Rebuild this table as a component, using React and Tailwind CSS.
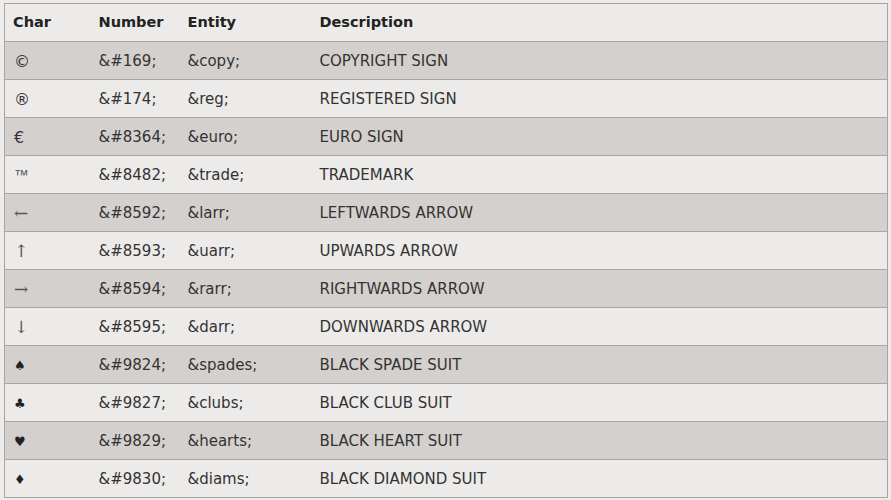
const rows = [
  ['\u00A9', '&#169;', '&copy;', 'COPYRIGHT SIGN'],
  ['\u00AE', '&#174;', '&reg;', 'REGISTERED SIGN'],
  ['\u20AC', '&#8364;', '&euro;', 'EURO SIGN'],
  ['\u2122', '&#8482;', '&trade;', 'TRADEMARK'],
  ['\u2190', '&#8592;', '&larr;', 'LEFTWARDS ARROW'],
  ['\u2191', '&#8593;', '&uarr;', 'UPWARDS ARROW'],
  ['\u2192', '&#8594;', '&rarr;', 'RIGHTWARDS ARROW'],
  ['\u2193', '&#8595;', '&darr;', 'DOWNWARDS ARROW'],
  ['\u2660', '&#9824;', '&spades;', 'BLACK SPADE SUIT'],
  ['\u2663', '&#9827;', '&clubs;', 'BLACK CLUB SUIT'],
  ['\u2665', '&#9829;', '&hearts;', 'BLACK HEART SUIT'],
  ['\u2666', '&#9830;', '&diams;', 'BLACK DIAMOND SUIT'],
];

// char glyph styling: arrows look thin and long, suits are small
const charClass = (i) => {
  if (i >= 4 && i <= 7) return "font-['DejaVu_Serif',serif] text-[17px] text-[#555]";
  if (i >= 8) return "text-[13px] text-[#222]";
  if (i === 3) return "font-['Liberation_Sans',sans-serif] text-[15px] text-[#555]";
  return "text-[16px]";
};

export default function App() {
  return (
    <div className="min-h-[500px] w-[891px] bg-[#eeecea] pt-[3px] pl-[4px] font-['DejaVu_Sans',Verdana,sans-serif] text-[15px] text-[#333]">
      <table className="w-[884px] table-fixed border-collapse border border-[#a8a4a1]">
        <colgroup>
          <col className="w-[86px]" />
          <col className="w-[89px]" />
          <col className="w-[132px]" />
          <col />
        </colgroup>
        <thead>
          <tr className="h-[38px] bg-[#edebe9] text-[14.5px]">
            <th className="pl-[8px] pt-[1px] text-left font-bold text-[#222]">Char</th>
            <th className="pl-[8px] pt-[1px] text-left font-bold text-[#222]">Number</th>
            <th className="pl-[8px] pt-[1px] text-left font-bold text-[#222]">Entity</th>
            <th className="pl-[8px] pt-[1px] text-left font-bold text-[#222]">Description</th>
          </tr>
        </thead>
        <tbody>
          {rows.map((r, i) => (
            <tr
              key={r[1]}
              className={`h-[38px] border-t border-[#aaa6a3] ${i % 2 === 0 ? 'bg-[#d4d0cd]' : 'bg-[#edebe9]'}`}
            >
              <td className="pl-[9px] pt-[2px]">
                <span className={charClass(i)}>{r[0]}</span>
              </td>
              <td className="pl-[8px] pt-[2px]">{r[1]}</td>
              <td className="pl-[8px] pt-[2px]">{r[2]}</td>
              <td className="pl-[8px] pt-[2px]">{r[3]}</td>
            </tr>
          ))}
        </tbody>
      </table>
    </div>
  );
}
